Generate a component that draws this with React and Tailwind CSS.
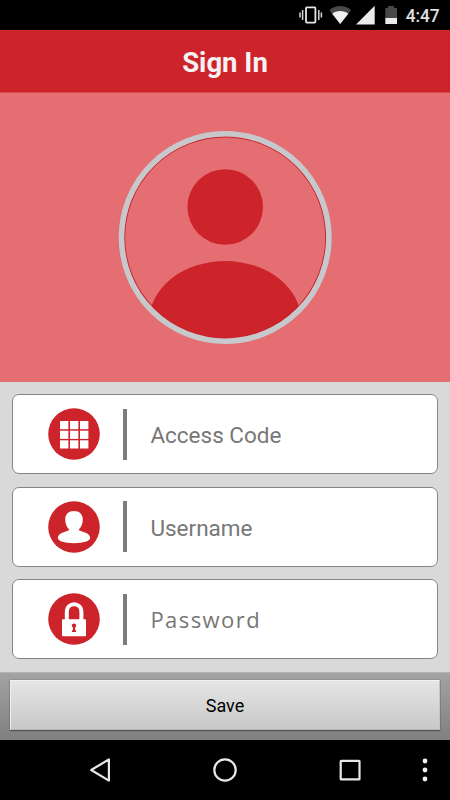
function StatusBar() {
  return (
    <div className="h-[30px] shrink-0 bg-black">
      <svg width="450" height="30" viewBox="0 0 450 30" role="img" aria-label="4:47">
        <rect x="306" y="7.4" width="9.4" height="15.2" rx="0.8" fill="none" stroke="#e6e6e6" strokeWidth="1.8" />
        <path d="M302.6 10v10M318.8 10v10M300 12.5v5M321.4 12.5v5" stroke="#d6d6d6" strokeWidth="1.5" />
        <path d="M329.5 10.3C335.5 4.7 345 4.7 351 10.3L340.2 24Z" fill="#484848" />
        <path d="M332.2 13.8C336.5 10.2 344 10.2 348.3 13.8L340.2 24Z" fill="#f0f0f0" />
        <path d="M356 24.5H374.7V5.8Z" fill="#ebebeb" />
        <path d="M385.3 8H388V6h6v2h3v10h-11.7Z" fill="#484848" />
        <path d="M385.3 18H397v6h-11.7Z" fill="#ebebeb" />
        <text x="405.7" y="22" fill="#e0e0e0" fontSize="18.4" fontWeight="500" textLength="34" lengthAdjust="spacingAndGlyphs">4:47</text>
      </svg>
    </div>
  );
}

function Avatar() {
  return (
    <svg width="450" height="289" viewBox="0 93 450 289">
      <defs>
        <clipPath id="avatar-clip">
          <circle cx="225.2" cy="237.5" r="102" />
        </clipPath>
      </defs>
      <circle cx="225.2" cy="207" r="37.8" fill="#cc242a" />
      <ellipse cx="225.2" cy="321" rx="76" ry="60" fill="#cc242a" clipPath="url(#avatar-clip)" />
      <circle cx="225.2" cy="237.5" r="100.6" fill="none" stroke="#c5222a" strokeWidth="1.2" />
      <circle cx="225.2" cy="237.5" r="103.7" fill="none" stroke="#c7c8cc" strokeWidth="5.6" />
    </svg>
  );
}

function GridIcon() {
  return (
    <g fill="#fff">
      {[12, 22, 32].map((x) =>
        [13, 22.7, 32.3].map((y) => <rect key={`${x}-${y}`} x={x} y={y} width="8.4" height="8.2" />)
      )}
    </g>
  );
}

function UserIcon() {
  return (
    <path
      d="M26 10C20.7 10 17.2 13.4 17.2 18.3C17.2 22.6 18.6 26 21.2 28.5C20.2 31.2 9.8 30.8 9.8 37C9.8 40.1 16.5 42.2 26 42.2S42.2 40.1 42.2 37C42.2 30.8 31.8 31.2 30.8 28.5C33.4 26 34.8 22.6 34.8 18.3C34.8 13.4 31.3 10 26 10Z"
      fill="#fff"
    />
  );
}

function LockIcon() {
  return (
    <>
      <path d="M18.8 28V19.2C18.8 8.6 33.4 8.6 33.4 19.2V28" fill="none" stroke="#fff" strokeWidth="4" />
      <rect x="14" y="26.2" width="24" height="17" rx="0.8" fill="#fff" />
      <circle cx="26" cy="32.6" r="2.2" fill="#cc242a" />
      <path d="M25 33h2.1v4.2h1v1.7h-4.1v-1.7h1Z" fill="#cc242a" />
    </>
  );
}

function Field({ icon, label, labelClass }) {
  return (
    <div className="flex h-[80px] items-center rounded-[7px] border border-[#858585] bg-white pl-[35px]">
      <svg width="52" height="52" viewBox="0 0 52 52">
        <circle cx="26" cy="26" r="25.8" fill="#cc242a" />
        {icon}
      </svg>
      <div className="ml-[23px] h-[51px] w-1 bg-[#7c7c7c]" />
      <span className={`ml-[23px] whitespace-nowrap text-[#777] ${labelClass}`}>{label}</span>
    </div>
  );
}

function NavBar() {
  return (
    <div className="h-[60px] bg-black">
      <svg width="450" height="60" viewBox="0 0 450 60" fill="none" stroke="#e8e8e8" strokeWidth="2.2">
        <path d="M108.9 19.4V40.6L91.2 30Z" strokeLinejoin="round" />
        <circle cx="225" cy="30" r="10.7" />
        <rect x="340.7" y="20.8" width="18.8" height="18.6" rx="0.5" />
        <g fill="#f2f2f2" stroke="none">
          <circle cx="425" cy="21" r="2.4" />
          <circle cx="425" cy="30" r="2.4" />
          <circle cx="425" cy="39" r="2.4" />
        </g>
      </svg>
    </div>
  );
}

export default function App() {
  return (
    <div className="flex h-[800px] w-[450px] flex-col overflow-hidden bg-[#d9d9d9] font-[Roboto,sans-serif]">
      <StatusBar />
      <header className="flex h-[63px] shrink-0 items-center justify-center border-b border-[#d8474d] bg-[#cc242a] pt-[3px]">
        <h1 className="text-[27.5px] leading-8 font-bold text-[#f5f0f2]">Sign In</h1>
      </header>
      <div className="h-[289px] shrink-0 bg-[#e46e72]">
        <Avatar />
      </div>
      <main className="flex h-[290px] shrink-0 flex-col gap-[12.6px] pr-[12.5px] pl-[12.4px] pt-3">
        <Field icon={<GridIcon />} label="Access Code" labelClass="text-[22.5px] pt-[4px]" />
        <Field icon={<UserIcon />} label="Username" labelClass="text-[22.5px] pt-[4px]" />
        <Field
          icon={<LockIcon />}
          label="Password"
          labelClass="font-['Open_Sans',sans-serif] text-[22px] tracking-[1.45px]"
        />
      </main>
      <div className="h-[68px] shrink-0 border-t border-[#b4b4b4] bg-linear-to-b from-[#a3a3a3] to-[#808080] px-[10px] pt-[7px]">
        <button className="block h-[50px] w-full border border-t-[#f2f2f2] border-r-[#c5c5c5] border-b-[#b5b5b5] border-l-[#f0f0f0] bg-linear-to-b from-[#e6e6e6] to-[#c8c8c8] pt-[1px] text-[18px] text-black shadow-[0_1px_1px_0_#555,0_0_1px_0_#555]">
          Save
        </button>
      </div>
      <NavBar />
    </div>
  );
}
